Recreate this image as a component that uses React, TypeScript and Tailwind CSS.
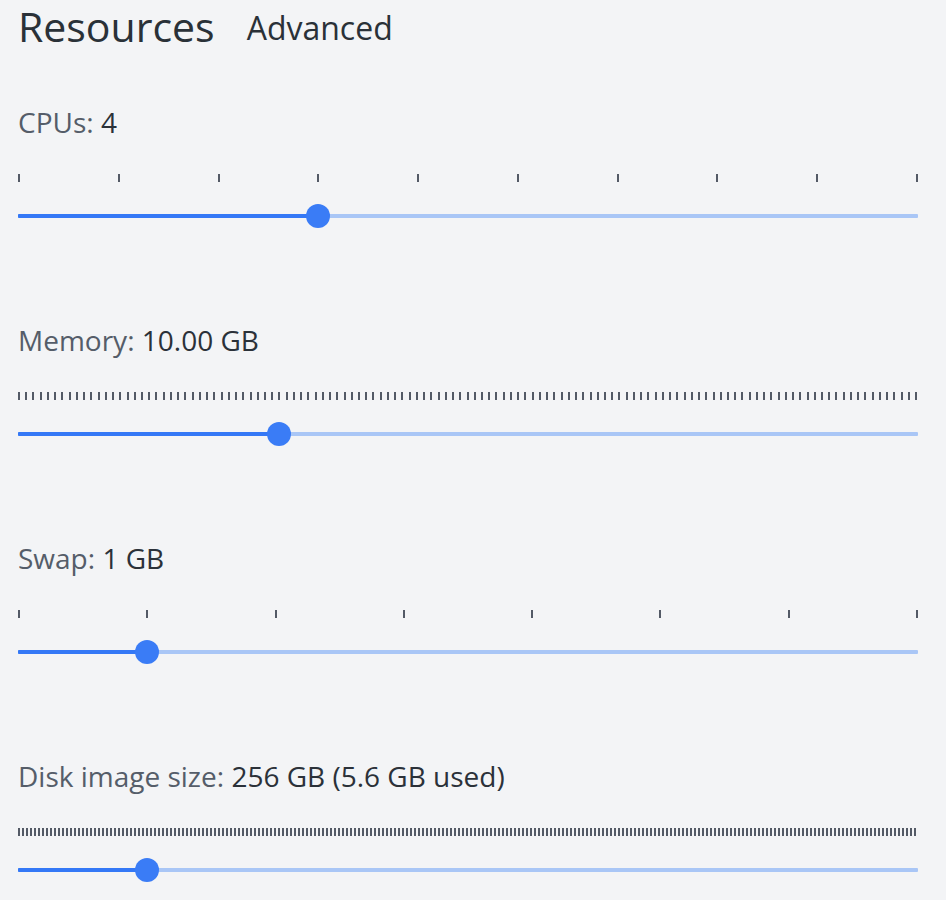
import React from "react";

type SliderProps = {
  label: string;
  value: string;
  ticks: number; // number of intervals
  index: number; // selected interval index
};

function Ticks({ count }: { count: number }) {
  const items = Array.from({ length: count + 1 }, (_, i) => i);
  return (
    <div className="flex h-[8px] w-full justify-between">
      {items.map((i) => (
        <div key={i} className="h-[8px] w-[2px] shrink-0 bg-[#535a66]" />
      ))}
    </div>
  );
}

function Slider({ label, value, ticks, index }: SliderProps) {
  const pct = (index / ticks) * 100;
  return (
    <section className="flex flex-col">
      <div className="text-[28px] leading-[40px]">
        <span className="text-[#555d69]">{label}: </span>
        <span className="text-[#2b3139]">{value}</span>
      </div>
      <div className="mt-[32px]">
        <Ticks count={ticks} />
      </div>
      <div className="relative mt-[22px] flex h-[24px] items-center">
        <div className="flex h-[4px] w-full overflow-hidden rounded-[1px] bg-[#a9c6f6]">
          <div className="h-full bg-[#3478f6]" style={{ width: `${pct}%` }} />
        </div>
        <div
          className="absolute top-0 h-[24px] w-[24px] rounded-full bg-[#3a7cf6]"
          style={{ left: `calc(${pct}% - 12px)` }}
        />
      </div>
    </section>
  );
}

export default function App() {
  return (
    <div className="min-h-[900px] w-[946px] bg-[#f3f4f6] pl-[18px] font-['Open_Sans',sans-serif]">
      <div className="flex h-[52px] items-start gap-[32px]">
        <h1 className="text-[41px] font-normal leading-[52px] text-[#2a3138]">Resources</h1>
        <div className="pt-[6px] text-[32px] leading-[43px] text-[#2a3138]">Advanced</div>
      </div>
      <div className="mt-[50px] flex w-[900px] flex-col gap-[92px]">
        <Slider label="CPUs" value="4" ticks={9} index={3} />
        <Slider label="Memory" value="10.00 GB" ticks={124} index={36} />
        <Slider label="Swap" value="1 GB" ticks={7} index={1} />
        <Slider label="Disk image size" value="256 GB (5.6 GB used)" ticks={224} index={32} />
      </div>
    </div>
  );
}
